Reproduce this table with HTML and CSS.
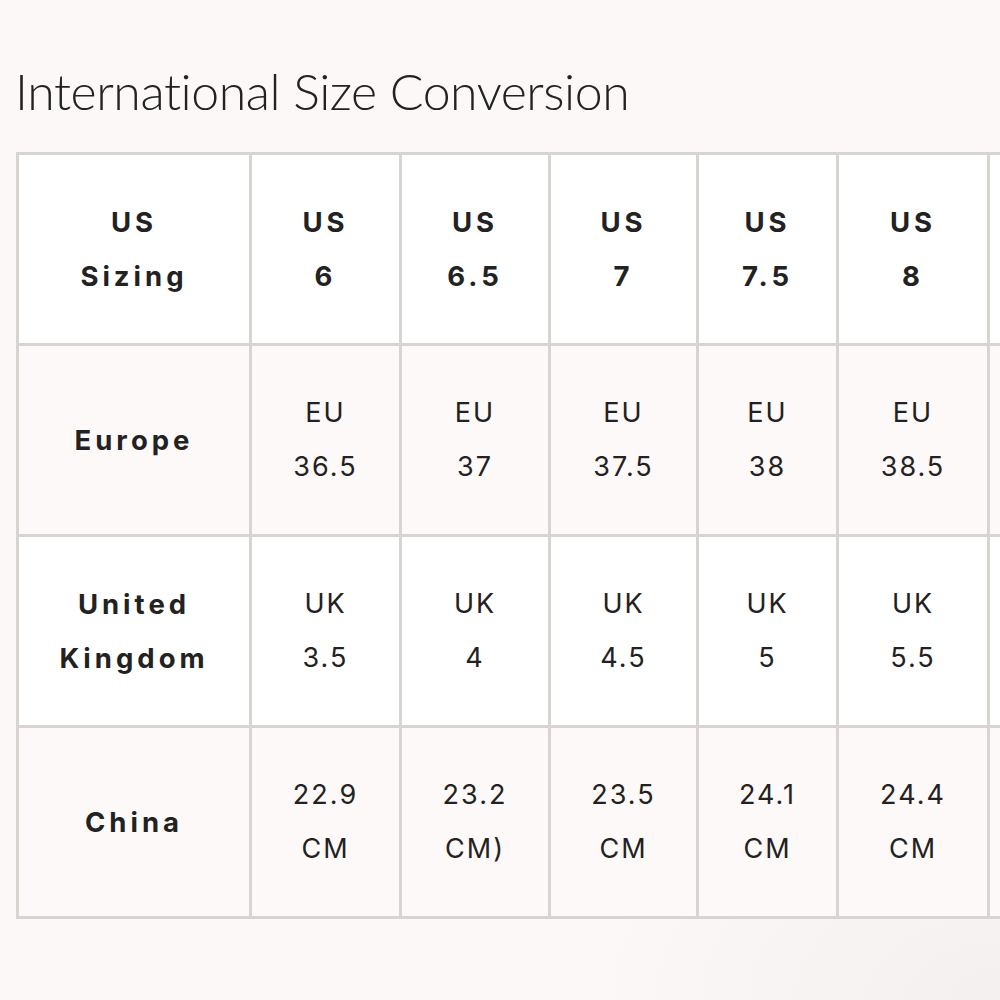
FILE: index.html
```html
<!DOCTYPE html>
<html lang="en">
<head>
<meta charset="utf-8">
<title>International Size Conversion</title>
<link rel="stylesheet" href="styles.css">
</head>
<body>
<main class="page">
  <h1 class="title">International Size Conversion</h1>
  <table class="size-table">
    <colgroup>
      <col class="c-label">
      <col class="c-150">
      <col class="c-149">
      <col class="c-148">
      <col class="c-140">
      <col class="c-151">
      <col class="c-150">
    </colgroup>
    <tbody>
      <tr class="row-white">
        <th>US<br>Sizing</th>
        <th>US<br>6</th>
        <th>US<br>6.5</th>
        <th>US<br>7</th>
        <th>US<br>7.5</th>
        <th>US<br>8</th>
        <th></th>
      </tr>
      <tr class="row-tint">
        <th>Europe</th>
        <td>EU<br>36.5</td>
        <td>EU<br>37</td>
        <td>EU<br>37.5</td>
        <td>EU<br>38</td>
        <td>EU<br>38.5</td>
        <td></td>
      </tr>
      <tr class="row-white">
        <th>United<br>Kingdom</th>
        <td>UK<br>3.5</td>
        <td>UK<br>4</td>
        <td>UK<br>4.5</td>
        <td>UK<br>5</td>
        <td>UK<br>5.5</td>
        <td></td>
      </tr>
      <tr class="row-tint">
        <th>China</th>
        <td>22.9<br>CM</td>
        <td>23.2<br>CM)</td>
        <td>23.5<br>CM</td>
        <td>24.1<br>CM</td>
        <td>24.4<br>CM</td>
        <td></td>
      </tr>
    </tbody>
  </table>
</main>
</body>
</html>
```

FILE: styles.css
```css
html, body {
  margin: 0;
  padding: 0;
  overflow: hidden;
  width: 1000px;
  height: 1000px;
}

body {
  background:
    radial-gradient(ellipse 420px 260px at 100% 100%, rgba(0, 0, 0, 0.035), rgba(0, 0, 0, 0) 100%),
    #fcf8f7;
  color: #222222;
  font-family: "Inter", "Liberation Sans", sans-serif;
}

.page {
  padding: 66px 0 0 15px;
}

.title {
  margin: 0 0 36px 0;
  font-family: "Lato", "Liberation Sans", sans-serif;
  font-weight: 300;
  font-size: 50px;
  line-height: 50px;
  letter-spacing: -0.45px;
  font-variant-ligatures: none;
  color: #222222;
  white-space: nowrap;
}

.size-table {
  margin-left: 1px;
  border-collapse: separate;
  border-spacing: 0;
  table-layout: fixed;
  width: 1124px;
  border-left: 3px solid #d8d4d0;
  border-top: 3px solid #d8d4d0;
}

.c-label { width: 233px; }
.c-150 { width: 150px; }
.c-149 { width: 149px; }
.c-148 { width: 148px; }
.c-140 { width: 140px; }
.c-151 { width: 151px; }

.size-table th,
.size-table td {
  height: 191px;
  padding: 0;
  box-sizing: border-box;
  border-right: 3px solid #d8d4d0;
  border-bottom: 3px solid #d8d4d0;
  text-align: center;
  vertical-align: middle;
  font-size: 27px;
  line-height: 54px;
  white-space: nowrap;
}

.size-table th {
  font-weight: 700;
  font-size: 27.5px;
  letter-spacing: 4px;
}

.size-table td {
  font-weight: 400;
  letter-spacing: 2px;
}

.row-white th,
.row-white td {
  background: #ffffff;
}

.row-tint th,
.row-tint td {
  background: #fdf9f8;
}
```
